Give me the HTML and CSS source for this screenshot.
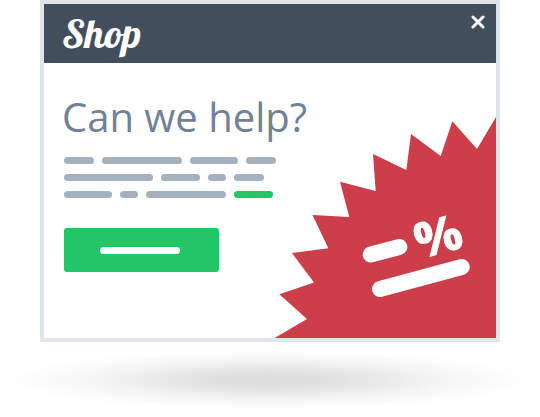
FILE: index.html
```html
<!DOCTYPE html>
<html lang="en">
<head>
<meta charset="utf-8">
<meta name="viewport" content="width=device-width, initial-scale=1">
<title>Shop</title>
<link rel="stylesheet" href="styles.css">
</head>
<body>
<main class="stage">
  <section class="popup">
    <header class="popup-header">
      <span class="brand">Shop</span>
      <button class="close" type="button" aria-label="Close">
        <svg viewBox="0 0 14 14" width="14" height="14" aria-hidden="true"><path d="M2 2L12 12M12 2L2 12"/></svg>
      </button>
    </header>
    <div class="popup-body">
      <svg class="burst" viewBox="0 0 222 221" width="222" height="221" aria-hidden="true">
        <path class="burst-shape" d="M222 0L203 32L178.300 4.300L166.700 39L137 17L132.300 53L99 37L101.700 74L66 64.700L75.300 100L38.500 98L54.300 131.300L18 136L40 165.500L5.300 177.300L33 202L.500 221H222Z"/>
        <path class="burst-bar" d="M96.700 137.500L125.300 130M106 172L187.700 150"/>
        <text class="burst-percent" x="164" y="137" text-anchor="middle" transform="rotate(-15 164 119)">%</text>
      </svg>
      <h1 class="title">Can we help?</h1>
      <div class="lines">
        <div class="line"><i class="word w30"></i><i class="word w80"></i><i class="word w48"></i><i class="word w30"></i></div>
        <div class="line"><i class="word w89"></i><i class="word w39"></i><i class="word w18"></i><i class="word w30"></i></div>
        <div class="line"><i class="word w48"></i><i class="word w18"></i><i class="word w80"></i><i class="word word-link w39"></i></div>
      </div>
      <button class="action" type="button" aria-label="Continue"><i class="word word-light w80"></i></button>
    </div>
  </section>
  <div class="shadow"></div>
</main>
</body>
</html>
```

FILE: styles.css
```css
* {
  box-sizing: border-box;
}

body {
  margin: 0;
  background: #fff;
  font-family: "Open Sans", sans-serif;
}

.popup {
  margin: 0 40px;
  border: 4px solid #e1e5ea;
  background: #fff;
}

.popup-header {
  display: flex;
  justify-content: space-between;
  align-items: flex-start;
  padding: 9px 11px 10px 18px;
  background: #434e5c;
}

.brand {
  color: #fff;
  font: normal 40px/40px Lobster, "Liberation Serif", serif;
}

.close {
  display: flex;
  padding: 2px 0;
  border: 0;
  background: none;
  cursor: pointer;
}

.close path {
  fill: none;
  stroke: #fff;
  stroke-width: 3;
  stroke-linecap: round;
}

.popup-body {
  position: relative;
  padding: 30px 20px 66px;
}

.title {
  position: relative;
  margin: 0 0 16px -2px;
  color: #6f8299;
  font-size: 40px;
  font-weight: 400;
  line-height: 48px;
}

.lines {
  display: grid;
  gap: 10px;
  margin-bottom: 30px;
}

.line {
  display: flex;
  gap: 8px;
}

.word {
  display: block;
  height: 7px;
  border-radius: 4px;
  background: #a6b1c0;
}

.word-link {
  background: #22c667;
}

.word-light {
  background: #fff;
}

.w18 { width: 18px; }
.w30 { width: 30px; }
.w39 { width: 39px; }
.w48 { width: 48px; }
.w80 { width: 80px; }
.w89 { width: 89px; }

.action {
  display: flex;
  align-items: center;
  width: 155px;
  height: 44px;
  padding: 0 36px;
  border: 0;
  border-radius: 3px;
  background: #22c667;
  cursor: pointer;
}

.burst {
  position: absolute;
  right: 0;
  bottom: 0;
}

.burst-shape {
  fill: #cb3e4a;
}

.burst-bar {
  fill: none;
  stroke: #fff;
  stroke-width: 16;
  stroke-linecap: round;
}

.burst-percent {
  fill: #fff;
  font: 800 50px "Open Sans", sans-serif;
}

.shadow {
  height: 60px;
  margin: 8px 8px 0;
  background: radial-gradient(closest-side, #dcdcdc 0%, #dfdfdf 20%, #e9e9e9 42%, #f4f4f4 64%, #fbfbfb 84%, #fff 100%);
}
```
